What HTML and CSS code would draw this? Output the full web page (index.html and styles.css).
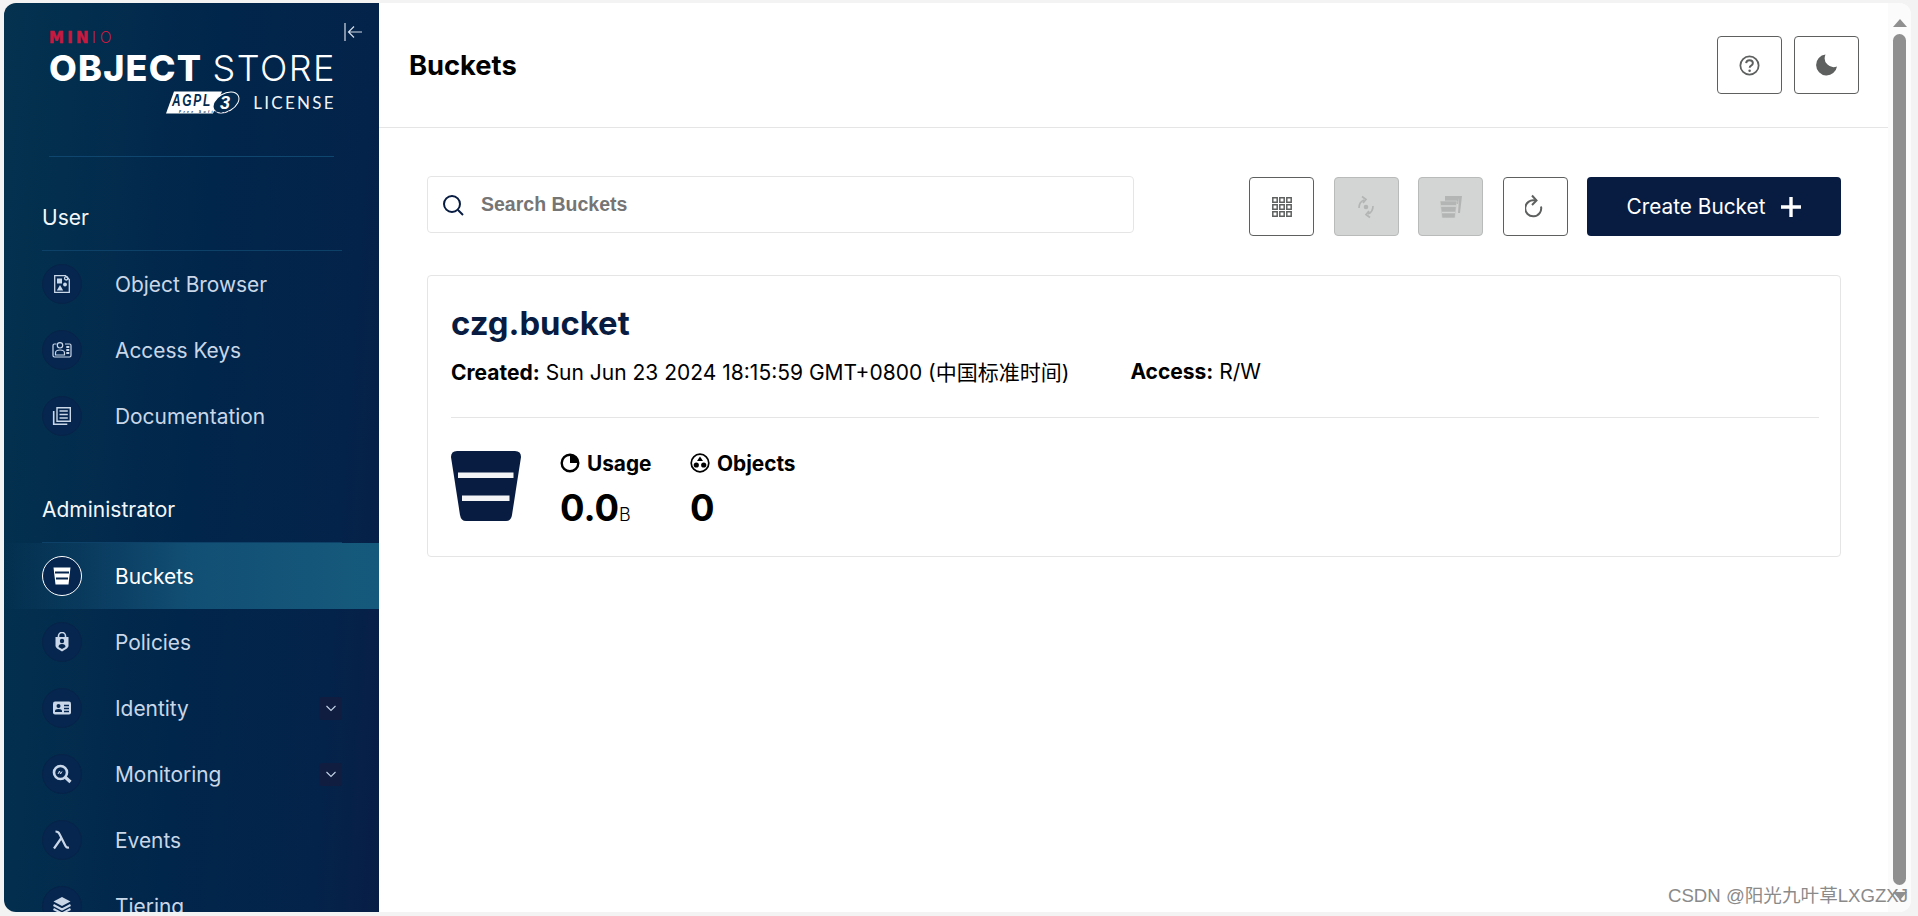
FILE: index.html
```html
<!DOCTYPE html>
<html lang="en">
<head>
<meta charset="utf-8">
<title>MinIO Object Store - Buckets</title>
<link rel="stylesheet" href="styles.css">
</head>
<body>
<div class="window">
  <aside class="sidebar">
    <div class="brand">
      <div class="brand-top">
        <div class="minio"><b>MIN</b><i>IO</i></div>
        <button class="collapse" aria-label="Collapse menu">
          <svg viewBox="0 0 18 18" width="18" height="18" fill="none" stroke="#d5dde8" stroke-width="1.2"><path d="M1 0v18M18 9H5M10 3.500 4.500 9l5.500 5.500"/></svg>
        </button>
      </div>
      <div class="wordmark"><b>OBJECT</b> <span>STORE</span></div>
      <div class="license">
        <svg class="agpl" viewBox="0 0 74 25" width="74" height="25">
          <path d="M8 1.500H56L47 23.500H0Z" fill="#fff"/>
          <ellipse cx="60" cy="12.500" rx="14" ry="9" transform="rotate(-30 60 12.500)" fill="#042a4e" stroke="#fff" stroke-width="1"/>
          <text x="6" y="15.500" class="agpl-text" textLength="40" lengthAdjust="spacingAndGlyphs">AGPL</text>
          <text x="13" y="22.800" class="agpl-free">Free Software</text>
          <text x="54" y="18.500" class="agpl-three">3</text>
        </svg>
        <span>LICENSE</span>
      </div>
    </div>

    <h2 class="nav-label">User</h2>
    <nav class="nav-list">
      <a class="nav-item"><span class="nav-ico"><svg viewBox="0 0 20 20" width="20" height="20" fill="none" stroke="currentColor" stroke-width="1.300"><path d="M2.700 1.700h10.800l3.800 3.800v12.800H2.700z"/><path d="M5 4.500h5v5H5z" fill="currentColor" stroke="none"/><circle cx="14.200" cy="4.300" r="1.700"/><circle cx="13" cy="10.500" r="1.900" fill="currentColor" stroke="none"/><path d="M8 11l3.200 5.500H4.800z" fill="currentColor" stroke="none"/></svg></span>Object Browser</a>
      <a class="nav-item"><span class="nav-ico"><svg viewBox="0 0 20 20" width="20" height="20" fill="none" stroke="currentColor" stroke-width="1.200"><path d="M4.500 4H2.400Q1 4 1 5.400v10.200Q1 17 2.400 17h15.200q1.400 0 1.400-1.400V5.400Q19 4 17.600 4H13"/><circle cx="8" cy="5.300" r="2.700"/><path d="M3.500 15v-2q0-3 4.500-3t4.500 3v2z"/><path d="M14.300 7H17.300M14.300 10H17.300M14.300 13H17.300" stroke-width="2"/></svg></span>Access Keys</a>
      <a class="nav-item"><span class="nav-ico"><svg viewBox="0 0 20 20" width="20" height="20" fill="none" stroke="currentColor" stroke-width="1.400"><path d="M5 1.700h13.300v13.600H5zM7.500 5h8.300M7.500 8.500h8.300M7.500 12h8.300"/><path d="M1.700 5v13.300h13.600" stroke-width="1.600"/></svg></span>Documentation</a>
    </nav>

    <h2 class="nav-label">Administrator</h2>
    <nav class="nav-list">
      <a class="nav-item active"><span class="nav-ico"><svg viewBox="0 0 20 20" width="20" height="20"><path d="M1.500 1.500h17l-2 17h-13z" fill="currentColor"/><path d="M3 6.500h14M4 12.500h12" stroke="#06264f" stroke-width="1.800"/></svg></span>Buckets</a>
      <a class="nav-item"><span class="nav-ico"><svg viewBox="0 0 20 20" width="20" height="20"><path d="M6.500 5V4a3.500 3.500 0 0 1 7 0v1" fill="none" stroke="currentColor" stroke-width="1.600"/><path d="M3.500 5h13v9q0 2-6.500 5.500Q3.500 16 3.500 14z" fill="currentColor"/><circle cx="10" cy="9" r="2.200" fill="#05264e"/><path d="M6.500 15q0-3 3.500-3t3.500 3l-3.500 2z" fill="#05264e"/></svg></span>Policies</a>
      <a class="nav-item"><span class="nav-ico"><svg viewBox="0 0 20 20" width="20" height="20"><rect x="1" y="3.500" width="18" height="13" rx="2" fill="currentColor"/><circle cx="6.500" cy="8" r="2" fill="#05264e"/><path d="M3 14v-1q0-2 3.500-2t3.500 2v1z" fill="#05264e"/><path d="M12 7.500h5M12 10.500h5M12 13.500h5" stroke="#05264e" stroke-width="1.300"/></svg></span>Identity<span class="chev"><svg viewBox="0 0 12 12" width="12" height="12" fill="none" stroke="#c3d3e6" stroke-width="1.100"><path d="M1.500 4 6 8.500 10.500 4"/></svg></span></a>
      <a class="nav-item"><span class="nav-ico"><svg viewBox="0 0 20 20" width="20" height="20" fill="none" stroke="currentColor"><circle cx="8.500" cy="8.500" r="6.500" stroke-width="2.600"/><path d="M13 13l5.500 5" stroke-width="3.200"/><path d="M6 10l1.500-3 1 3 1.500-2.500" stroke-width="1"/></svg></span>Monitoring<span class="chev"><svg viewBox="0 0 12 12" width="12" height="12" fill="none" stroke="#c3d3e6" stroke-width="1.100"><path d="M1.500 4 6 8.500 10.500 4"/></svg></span></a>
      <a class="nav-item"><span class="nav-ico"><svg viewBox="0 0 20 20" width="20" height="20" fill="none" stroke="currentColor" stroke-width="2.200"><path d="M3.500 1.500q3 0 4 2.500l6 12q1 2 3.500 1.500M9 8.500 2 18.500"/></svg></span>Events</a>
      <a class="nav-item"><span class="nav-ico"><svg viewBox="0 0 20 20" width="20" height="20"><path d="M10 1l8.500 4.500L10 10 1.500 5.500z" fill="currentColor"/><path d="M1.500 9 10 13.500 18.500 9M1.500 13 10 17.500 18.500 13" fill="none" stroke="currentColor" stroke-width="2"/></svg></span>Tiering</a>
    </nav>
  </aside>

  <main class="main">
    <header class="topbar">
      <h1>Buckets</h1>
      <div class="topbar-actions">
        <button class="icon-btn top-btn" aria-label="Help"><svg viewBox="0 0 20 20" width="21" height="21" fill="none" stroke="#5e605f" stroke-width="1.700"><circle cx="10" cy="10" r="8.700"/><path d="M6.800 7.800Q7 5 10 5q3.200 0 3.200 2.700 0 1.500-1.600 2.400-1.400.8-1.400 2.100" stroke-width="1.900"/><circle cx="10.100" cy="14.900" r="1.200" fill="#5e605f" stroke="none"/></svg></button>
        <button class="icon-btn top-btn" aria-label="Dark mode"><svg viewBox="0 0 22 22" width="22" height="22"><path d="M9.500.5a9 9 0 0 0 11.500 12A10.500 10.500 0 1 1 9.500.5z" fill="#5e605f"/></svg></button>
      </div>
    </header>

    <section class="content">
      <div class="toolbar">
        <label class="search">
          <svg viewBox="0 0 22 22" width="22" height="22" fill="none" stroke="#081c42" stroke-width="2"><circle cx="10" cy="10" r="8"/><path d="M16 16l5 5"/></svg>
          <span>Search Buckets</span>
        </label>
        <div class="actions">
          <button class="icon-btn" aria-label="Select"><svg viewBox="0 0 20 20" width="20" height="20" fill="none" stroke="#5e605f" stroke-width="1.500"><path d="M.8.800h4.400v4.400H.8zM7.800.800h4.400v4.400H7.800zM14.800.800h4.400v4.400h-4.400zM.8 7.800h4.400v4.400H.8zM7.800 7.800h4.400v4.400H7.800zM14.800 7.800h4.400v4.400h-4.400zM.8 14.800h4.400v4.400H.8zM7.800 14.800h4.400v4.400H7.800zM14.800 14.800h4.400v4.400h-4.400z"/></svg></button>
          <button class="icon-btn disabled" aria-label="Replicate"><svg viewBox="0 0 20 24" width="20" height="24" fill="none" stroke="#b3b5b4" stroke-width="1.700"><path d="M3 13Q3 7 8 5M6 1.500l4 3-3 3.500M17 11q0 6-5 8M14 22.500l-4-3 3-3.500"/><circle cx="10" cy="12" r="2.300" fill="#b3b5b4" stroke="none"/></svg></button>
          <button class="icon-btn disabled" aria-label="Delete"><svg viewBox="0 0 24 24" width="24" height="24"><path d="M6 1H23L21 18H19L20 3H6z" fill="#b3b5b4"/><path d="M6 3H20L19 9H6z" fill="#b3b5b4"/><path d="M1 6H18L16 23H3z" fill="#b3b5b4" stroke="#d3d5d4" stroke-width=".6"/><path d="M2 11H17M3 17.500H16" stroke="#d3d5d4" stroke-width="1.500"/></svg></button>
          <button class="icon-btn" aria-label="Refresh"><svg viewBox="0 0 20 26" width="20" height="26" fill="none" stroke="#5e605f" stroke-width="2"><path d="M16 12.500A8 8 0 1 1 10 6.500"/><path d="M7 1.500l4.500 5-4.500 4.500"/></svg></button>
          <button class="create">Create Bucket<svg viewBox="0 0 20 20" width="20" height="20" fill="none" stroke="#fff" stroke-width="3.400"><path d="M10 0v20M0 10h20"/></svg></button>
        </div>
      </div>

      <article class="card">
        <h3 class="bucket-name">czg.bucket</h3>
        <div class="meta">
          <span><b>Created:</b> Sun Jun 23 2024 18:15:59 GMT+0800 (中国标准时间)</span>
          <span class="access"><b>Access:</b> R/W</span>
        </div>
        <hr class="rule">
        <div class="stats">
          <svg class="bucket-ico" viewBox="0 0 70 70" width="70" height="70"><path d="M6 0h58q6 0 6 6l-9 58q-1 6-6 6H15q-5 0-6-6L0 6q0-6 6-6z" fill="#081c42"/><path d="M7 21.500H62.500V27H7zM11 44.500H58.500V50H11z" fill="#f3f4f6"/></svg>
          <div class="stat">
            <div class="stat-label"><svg viewBox="0 0 20 20" width="20" height="20"><circle cx="10" cy="10" r="8.300" fill="none" stroke="#000" stroke-width="2.400"/><path d="M10 2v8h8a8 8 0 0 0-8-8z" fill="#000"/></svg>Usage</div>
            <div class="stat-value">0.0<small>B</small></div>
          </div>
          <div class="stat stat-objects">
            <div class="stat-label"><svg viewBox="0 0 20 20" width="20" height="20"><circle cx="10" cy="10" r="8.800" fill="none" stroke="#000" stroke-width="1.700"/><path d="M10 3.500l3 4.500H7z"/><circle cx="6.300" cy="12" r="2.600"/><circle cx="13.700" cy="12" r="2.600"/></svg>Objects</div>
            <div class="stat-value">0</div>
          </div>
        </div>
      </article>
    </section>
  </main>

  <div class="scrollbar">
    <span class="arrow arrow-up"></span>
    <span class="thumb"></span>
    <span class="arrow arrow-down"></span>
  </div>
</div>
<div class="watermark">CSDN @阳光九叶草LXGZXJ</div>
</body>
</html>
```

FILE: styles.css
```css
* { box-sizing: border-box; }

html, body {
  height: 100%;
  margin: 0;
  overflow: hidden;
}

body {
  background: #f3f3f3;
  font-family: Inter, "Noto Sans CJK SC", sans-serif;
  padding: 3px 7px 4px 4px;
}

.window {
  display: flex;
  height: 100%;
  background: #fff;
  border-radius: 12px;
  overflow: hidden;
}

/* Sidebar */
.sidebar {
  flex: 0 0 375px;
  height: 100%;
  overflow: hidden;
  padding: 0 37px 0 38px;
  background: linear-gradient(94deg, #04324f 0%, #01264b 50%, #04234a 85%, #081e45 100%);
  color: #c9d7e8;
}

.brand {
  height: 154px;
  margin: 0 8px 0 7px;
  padding-top: 24px;
  border-bottom: 1px solid #0f4670;
  position: relative;
}

.brand-top { display: flex; }

.minio {
  display: flex;
  align-items: center;
  height: 22px;
  color: #c8193f;
}
.minio b {
  font: 700 15px/22px "DejaVu Sans", sans-serif;
  letter-spacing: 3.200px;
  -webkit-text-stroke: .5px #c8193f;
}
.minio i {
  font: 300 15.500px/22px Inter, sans-serif;
  letter-spacing: 4px;
}

.collapse {
  position: absolute;
  top: 20px;
  right: -28px;
  padding: 0;
  border: 0;
  background: none;
  display: flex;
}

.wordmark {
  color: #fff;
  font-size: 36px;
  line-height: 38px;
  white-space: nowrap;
}
.wordmark b { font-weight: 800; letter-spacing: 1.200px; }
.wordmark span { font-weight: 300; letter-spacing: 1.500px; }

.license {
  display: flex;
  justify-content: flex-end;
  align-items: center;
  gap: 13px;
  margin-top: 3px;
  color: #f2f5f8;
  font-family: Lato, sans-serif;
  font-size: 17px;
  letter-spacing: 2.300px;
}
.license span { margin-right: -2px; }

.agpl { flex: none; }
.agpl-text { font: italic 700 16px "Liberation Sans", sans-serif; fill: #042a4e; }
.agpl-free { font: italic 700 3.500px "Liberation Sans", sans-serif; fill: #042a4e; }
.agpl-three { font: italic 700 18px "Liberation Sans", sans-serif; fill: #fff; }

.nav-label {
  height: 49px;
  margin: 45px 0 0;
  padding-bottom: 17px;
  line-height: 32px;
  font-size: 21px;
  font-weight: 400;
  color: #f4f7fa;
  border-bottom: 1px solid #0d4168;
}

.nav-list { display: flex; flex-direction: column; }

.nav-item {
  display: flex;
  align-items: center;
  height: 66px;
  font-size: 20.900px;
  position: relative;
}

.nav-ico {
  flex: none;
  display: flex;
  align-items: center;
  justify-content: center;
  width: 40px;
  height: 40px;
  margin-right: 33px;
  border-radius: 50%;
  background: #06264f;
  border: 1px solid #072348;
}

.chev {
  display: flex;
  align-items: center;
  justify-content: center;
  width: 23px;
  height: 23px;
  margin-left: auto;
  background: #101d40;
  border-radius: 3px;
}

.active {
  margin: 0 -37px 0 -38px;
  padding-left: 38px;
  color: #fff;
  background: linear-gradient(90deg, rgba(21, 90, 124, 0) 0%, #124f74 50%, #155a7c 100%);
}
.active .nav-ico { border: 1px solid #fff; }

/* Main */
.main {
  flex: 1;
  min-width: 0;
  display: flex;
  flex-direction: column;
}

.topbar {
  flex: none;
  height: 125px;
  display: flex;
  align-items: center;
  justify-content: space-between;
  padding: 0 29px 0 30px;
  border-bottom: 1px solid #e5e5e5;
}

.topbar h1 {
  margin: 0;
  font-size: 27.300px;
  font-weight: 700;
  color: #000;
}

.topbar-actions { display: flex; gap: 12px; }

.icon-btn {
  display: flex;
  align-items: center;
  justify-content: center;
  width: 65px;
  height: 59px;
  padding: 0;
  background: #fff;
  border: 1px solid #5e605f;
  border-radius: 4px;
}
.top-btn { height: 58px; }
.disabled { background: #d3d5d4; border-color: #b9bbba; }

.content { flex: 1; padding: 48px 47px 0 48px; }

.toolbar {
  display: flex;
  align-items: flex-start;
  justify-content: space-between;
}

.search {
  display: flex;
  align-items: center;
  gap: 17px;
  width: 707px;
  height: 57px;
  padding: 0 14px;
  border: 1px solid #e5e5e5;
  border-radius: 4px;
  font: 700 19.500px "Liberation Sans", sans-serif;
  color: #757575;
}

.actions { display: flex; gap: 19.500px; margin-top: 1px; }

.create {
  display: flex;
  align-items: center;
  justify-content: center;
  gap: 16px;
  width: 254px;
  height: 59px;
  border: 0;
  border-radius: 4px;
  background: #081c42;
  color: #fff;
  font: 400 20.800px Inter, sans-serif;
}

.card {
  height: 282px;
  margin-top: 39px;
  padding: 22px 21px 0 23px;
  border: 1px solid #e5e5e5;
  border-radius: 4px;
}

.bucket-name {
  margin: 0;
  height: 49px;
  line-height: 50px;
  font-size: 32.800px;
  font-weight: 700;
  color: #081c42;
}

.meta {
  display: flex;
  height: 48px;
  align-items: center;
  font-size: 21px;
  color: #000;
}
.meta b { font-weight: 700; }
.access { margin-left: 61px; }

.rule {
  margin: 22px 0 0;
  border: 0;
  border-top: 1px solid #e5e5e5;
}

.stats { display: flex; margin-top: 33px; }

.bucket-ico { flex: none; margin-right: 39px; }

.stat { width: 130px; color: #000; }

.stat-label {
  display: flex;
  align-items: center;
  gap: 7px;
  height: 26px;
  margin-top: -1px;
  font-size: 20.800px;
  font-weight: 700;
}

.stat-value {
  margin-top: 10px;
  height: 44px;
  line-height: 44px;
  font-size: 36.400px;
  font-weight: 700;
}
.stat-value small { font-size: 18px; font-weight: 300; }

/* Scrollbar */
.scrollbar {
  flex: 0 0 23px;
  display: flex;
  flex-direction: column;
  align-items: center;
  padding: 16px 0 12px;
  background: #fbfbfb;
}

.thumb {
  flex: 1;
  width: 13px;
  margin: 7px 0;
  background: #8f8f8f;
  border-radius: 7px;
}

.arrow {
  width: 0;
  height: 0;
  border-left: 7px solid transparent;
  border-right: 7px solid transparent;
}
.arrow-up { border-bottom: 8px solid #8f8f8f; }
.arrow-down { border-top: 8px solid #8f8f8f; }

.watermark {
  position: absolute;
  right: 10px;
  bottom: 8px;
  color: #8a8a8a;
  font: 400 18.600px "Liberation Sans", "Noto Sans CJK SC", sans-serif;
  line-height: 24px;
}
```
